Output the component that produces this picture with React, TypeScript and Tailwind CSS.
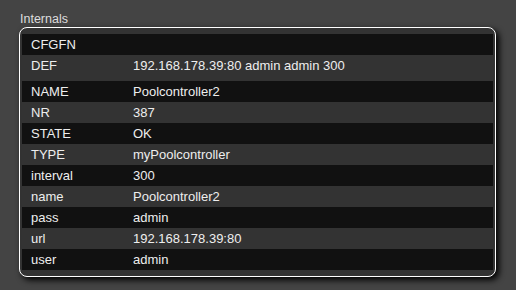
import React from 'react';

const defRows: [string, string][] = [
  ['CFGFN', ''],
  ['DEF', '192.168.178.39:80 admin admin 300'],
];

const internalRows: [string, string][] = [
  ['NAME', 'Poolcontroller2'],
  ['NR', '387'],
  ['STATE', 'OK'],
  ['TYPE', 'myPoolcontroller'],
  ['interval', '300'],
  ['name', 'Poolcontroller2'],
  ['pass', 'admin'],
  ['url', '192.168.178.39:80'],
  ['user', 'admin'],
];

function Rows({ rows }: { rows: [string, string][] }) {
  return (
    <div className="flex flex-col">
      {rows.map(([k, v], i) => (
        <div
          key={k}
          className={`flex h-[21px] items-center ${i % 2 === 0 ? 'bg-[#111]' : 'bg-[#333]'}`}
        >
          <div className="w-[111px] pl-[9px]">{k}</div>
          <div>{v}</div>
        </div>
      ))}
    </div>
  );
}

export default function App() {
  return (
    <div
      className="min-h-screen w-full bg-[#444] pl-[19px] pt-[12px] text-[#eee]"
      style={{ fontFamily: '"Liberation Sans", Arial, sans-serif' }}
    >
      {/* Section title */}
      <div className="h-[15px] pl-[1px] text-[12.5px] leading-[15px] text-[#ddd]">Internals</div>

      <div className="w-[477px] rounded-[8px] border border-white bg-[#333] px-[2px] pb-[6px] pt-[6px] text-[13px] shadow-[3px_3px_6px_#000]">
        <Rows rows={defRows} />
        <div className="mt-[5px]">
          <Rows rows={internalRows} />
        </div>
      </div>
    </div>
  );
}
